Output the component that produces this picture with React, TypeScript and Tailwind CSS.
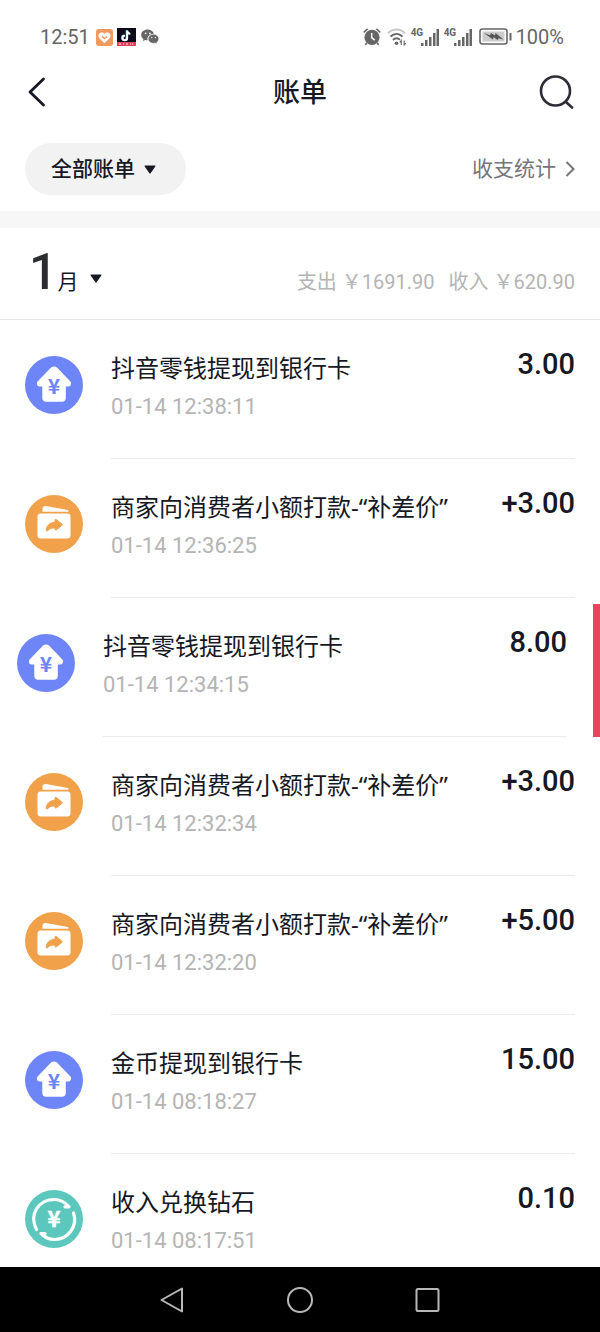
import { useState } from 'react';

type Kind = 'withdraw' | 'transfer' | 'exchange';

interface Bill {
  id: number;
  kind: Kind;
  title: string;
  time: string;
  amount: string;
}

const BILLS: Bill[] = [
  { id: 1, kind: 'withdraw', title: '抖音零钱提现到银行卡', time: '01-14 12:38:11', amount: '3.00' },
  { id: 2, kind: 'transfer', title: '商家向消费者小额打款-“补差价”', time: '01-14 12:36:25', amount: '+3.00' },
  { id: 3, kind: 'withdraw', title: '抖音零钱提现到银行卡', time: '01-14 12:34:15', amount: '8.00' },
  { id: 4, kind: 'transfer', title: '商家向消费者小额打款-“补差价”', time: '01-14 12:32:34', amount: '+3.00' },
  { id: 5, kind: 'transfer', title: '商家向消费者小额打款-“补差价”', time: '01-14 12:32:20', amount: '+5.00' },
  { id: 6, kind: 'withdraw', title: '金币提现到银行卡', time: '01-14 08:18:27', amount: '15.00' },
  { id: 7, kind: 'exchange', title: '收入兑换钻石', time: '01-14 08:17:51', amount: '0.10' },
];

function Caret() {
  return (
    <svg width="12" height="9" viewBox="0 0 12 9" fill="#161823" aria-hidden="true">
      <path d="M1.2 0.5h9.6c.6 0 .8.5.5.9L6.6 8.2c-.3.4-.9.4-1.2 0L.7 1.4C.4 1 .6.5 1.2.5z" />
    </svg>
  );
}

function SignalBars() {
  return (
    <svg width="18" height="17" viewBox="0 0 18 17" fill="#666" aria-hidden="true">
      <rect x="0" y="14" width="2.5" height="3" />
      <rect x="4" y="11" width="2.5" height="6" />
      <rect x="8" y="8" width="2.5" height="9" />
      <rect x="12" y="4" width="2.5" height="13" />
      <rect x="15.5" y="0" width="2.5" height="17" />
    </svg>
  );
}

function StatusBar() {
  return (
    <div className="flex h-[74px] shrink-0 items-center justify-between pl-10 pr-9 font-['Roboto',sans-serif] text-xl text-[#666]">
      <div className="flex items-center">
        <span>12:51</span>
        <svg className="ml-[6px]" width="17" height="17" viewBox="0 0 17 17" aria-hidden="true">
          <rect width="17" height="17" rx="3" fill="#f19a60" />
          <path d="M8.5 14.2 3.4 9.2C.9 6.4 3.6 2.6 6.7 3.6c.8.3 1.3.7 1.8 1.3.5-.6 1-1 1.8-1.3 3.1-1 5.8 2.8 3.3 5.6z" fill="#fff" />
          <path d="m6 7.2 2.4 2.3L11 7.2" fill="none" stroke="#f19a60" strokeWidth="1.4" />
        </svg>
        <svg className="ml-1" width="19" height="18" viewBox="0 0 19 18" aria-hidden="true">
          <rect width="19" height="18" fill="#0c0a18" />
          <path d="M10.2 2.5v7.6a2.3 2.3 0 1 1-2.3-2.3M10.2 3c.4 1.8 1.5 2.7 3.2 2.9" fill="none" stroke="#57d8dc" strokeWidth="2" transform="translate(-.5 -.3)" />
          <path d="M10.2 2.5v7.6a2.3 2.3 0 1 1-2.3-2.3M10.2 3c.4 1.8 1.5 2.7 3.2 2.9" fill="none" stroke="#fff" strokeWidth="1.9" />
          <rect y="14" width="19" height="4" fill="#e6405e" />
          <path d="M2 16h2m2 0h1m2 0h2m2 0h1m1 0h1" stroke="#f6b3bf" strokeWidth="1.5" />
        </svg>
        <svg className="ml-[5px]" width="18" height="16" viewBox="0 0 18 16" fill="#666" aria-hidden="true">
          <path d="M6.7.5C3 .5.2 2.9.2 5.9c0 1.7.9 3.2 2.3 4.2l-.6 2 2.3-1.2c.8.2 1.5.3 2.4.3-.9-3.5 2-6.4 6.3-6.4C12.2 2.3 9.7.5 6.7.5z" />
          <path d="M17.8 9.8c0-2.5-2.4-4.5-5.3-4.5S7.2 7.3 7.2 9.8s2.4 4.5 5.3 4.5c.6 0 1.2-.1 1.7-.2l1.9 1-.5-1.6c1.3-.8 2.2-2.2 2.2-3.7z" stroke="#fff" strokeWidth=".5" />
          <circle cx="4.6" cy="4.3" r=".9" fill="#fff" />
          <circle cx="8.9" cy="4.3" r=".9" fill="#fff" />
          <circle cx="10.8" cy="8.6" r=".7" fill="#fff" />
          <circle cx="14.3" cy="8.6" r=".7" fill="#fff" />
        </svg>
      </div>
      <div className="flex items-center">
        <svg width="18" height="18" viewBox="0 0 18 18" aria-hidden="true">
          <circle cx="9" cy="9.3" r="7.6" fill="#666" />
          <path d="M.8 4.3 4.6.9M17.2 4.3 13.4.9M3.8 15l-1.5 2M14.2 15l1.5 2" stroke="#666" strokeWidth="1.6" />
          <path d="M8.7 5v4.7l3 2.5" fill="none" stroke="#fff" strokeWidth="1.5" />
        </svg>
        <svg className="ml-[6px]" width="20" height="18" viewBox="0 0 20 18" fill="none" strokeWidth="2" aria-hidden="true">
          <path d="M1 5.3c5-5 12-5 17 0" stroke="#c8c8c8" />
          <path d="M3.5 8.6c3.7-3.4 8.5-3.4 12 0" stroke="#666" />
          <path d="M6 11.9c2.2-2 5-2 7 0" stroke="#666" />
          <circle cx="9.5" cy="15.3" r="1.8" fill="#666" />
          <path d="M14.3 17v-4.5l-1.5 1.8M17.2 12.5V17l1.6-1.8" stroke="#666" strokeWidth="1.1" />
        </svg>
        <span className="mb-2 ml-1 w-[10px] text-[10px] leading-none font-bold">4G</span>
        <SignalBars />
        <span className="mb-2 ml-[5px] w-[10px] text-[10px] leading-none font-bold">4G</span>
        <SignalBars />
        <svg className="ml-[7px]" width="33" height="18" viewBox="0 0 33 18" aria-hidden="true">
          <rect x="1" y="1" width="27" height="15" rx="2.5" fill="#fff" stroke="#666" strokeWidth="1.6" />
          <rect x="3.5" y="3.5" width="22" height="10" fill="#ccc" />
          <path d="m5 5 6 2.3 1-2.3 4 2.5.5-2.5 8 6.5-5-1.2-1 1.7-4-3-.5 2.5z" fill="#555" />
          <path d="M31.5 5v7.5" stroke="#666" strokeWidth="2" />
        </svg>
        <span className="ml-1">100%</span>
      </div>
    </div>
  );
}

function BillIcon({ kind }: { kind: Kind }) {
  if (kind === 'withdraw') {
    return (
      <svg className="mt-9 size-[58px] shrink-0" viewBox="0 0 58 58" aria-hidden="true">
        <circle cx="29" cy="29" r="29" fill="#6e85f7" />
        <path d="M26.3 11.3c1.6-1.2 3.8-1.2 5.4 0l13.7 14.3c1.4 1.7.6 4.9-1.9 4.9h-2.7v11.5c0 2.2-1.5 3.7-3.7 3.7H21c-2.2 0-3.7-1.5-3.7-3.7V30.500h-2.800c-2.500 0-3.300-3.200-1.900-4.900z" fill="#fff" />
        <text className="font-['Noto_Sans_CJK_SC']" x="29" y="38" textAnchor="middle" fontSize="21" fontWeight="700" fill="#6e85f7">¥</text>
      </svg>
    );
  }
  if (kind === 'transfer') {
    return (
      <svg className="mt-9 size-[58px] shrink-0" viewBox="0 0 58 58" aria-hidden="true">
        <circle cx="29" cy="29" r="29" fill="#f1a14a" />
        <path d="M17.5 16.8v-3c0-2 1.5-3 3.4-2.8l22 4c1 .3 1 1.8 0 1.8z" fill="#fff" />
        <rect x="12.5" y="18.5" width="33" height="25" rx="3.2" fill="#fff" />
        <path d="M30 25.2c0-.9.8-1.1 1.5-.5l5.2 4.200c.6.500.6 1.100 0 1.600l-5.200 4.200c-.7.600-1.500.3-1.500-.6v-1.200c-3.200-.1-5.500.6-7.300 2.700-.8.900-1.700.5-1.500-.6.600-4.800 3.800-7.500 8.800-7.800z" fill="#f1a14a" stroke="#f1a14a" />
      </svg>
    );
  }
  return (
    <svg className="mt-9 size-[58px] shrink-0" viewBox="0 0 58 58" aria-hidden="true">
      <circle cx="29" cy="29" r="29" fill="#5cc8bd" />
      <g fill="none" stroke="#fff" strokeWidth="3.2" strokeLinecap="round" strokeLinejoin="round">
        <path d="M11.500 39.500C3.500 24 14 9.500 29.500 9.500c5.600 0 10.500 2.500 14.500 7.300h-4" />
        <path d="M48.500 23C53 36.500 43 49.500 29.500 49.500c-5.500 0-9.500-2-13.500-6h4" />
      </g>
      <text className="font-['Noto_Sans_CJK_SC']" x="29" y="37" textAnchor="middle" fontSize="22" fontWeight="700" fill="#fff" stroke="#fff" strokeWidth=".5">¥</text>
    </svg>
  );
}

function BillRow({ bill, swiped }: { bill: Bill; swiped: boolean }) {
  return (
    <li className="flex overflow-hidden">
      <div className={`flex w-full shrink-0 gap-7 px-[25px] ${swiped ? '-ml-2' : ''}`}>
        <BillIcon kind={bill.kind} />
        <div className="flex h-[139px] min-w-0 flex-1 justify-between border-b border-[#ececec] pt-[30px]">
          <div className="min-w-0">
            <h2 className="truncate text-2xl leading-9">{bill.title}</h2>
            <p className="mt-[5px] font-['Roboto',sans-serif] text-[22px] leading-8 text-[#b4b4b4]">{bill.time}</p>
          </div>
          <span className="shrink-0 font-['Roboto',sans-serif] text-[29px] leading-7 font-medium">{bill.amount}</span>
        </div>
      </div>
      {swiped && <button type="button" aria-label="删除" className="mt-[6px] ml-px w-24 shrink-0 bg-[#e9435d]" />}
    </li>
  );
}

export default function App() {
  const [swipedId] = useState(3);

  return (
    <div className="flex h-screen flex-col bg-white font-['Noto_Sans','Noto_Sans_CJK_SC',sans-serif] text-[#161823]">
      <StatusBar />

      <header className="flex h-9 shrink-0 items-center justify-between px-[25px]">
        <button type="button" aria-label="返回" className="w-9">
          <svg width="24" height="32" viewBox="0 0 24 32" fill="none" stroke="#161823" strokeWidth="2.8" strokeLinecap="round" strokeLinejoin="round">
            <path d="M18.5 3 5 16l13.5 13" />
          </svg>
        </button>
        <h1 className="text-[27px] leading-9 font-medium">账单</h1>
        <button type="button" aria-label="搜索" className="w-9">
          <svg width="36" height="36" viewBox="0 0 36 36" fill="none" stroke="#2c2d35" strokeWidth="2.6" strokeLinecap="round">
            <circle cx="16.5" cy="17" r="14.5" />
            <path d="m27 28 6 5.5" />
          </svg>
        </button>
      </header>

      <div className="flex shrink-0 items-center justify-between px-[25px] pt-[33px] pb-4">
        <button type="button" className="flex h-[52px] items-center gap-[9px] rounded-full bg-[#f2f2f2] pr-[30px] pl-[26px] text-[21px] font-medium">
          全部账单
          <Caret />
        </button>
        <a href="#stats" className="flex items-center gap-[9px] text-[21px] text-[#75767b]">
          收支统计
          <svg width="10" height="16" viewBox="0 0 10 16" fill="none" stroke="#75767b" strokeWidth="2" aria-hidden="true">
            <path d="m1.5 1 7 7-7 7" />
          </svg>
        </a>
      </div>

      <div className="h-[17px] shrink-0 bg-[#f7f7f7]" />

      <section className="flex h-[92px] shrink-0 items-baseline justify-between border-b border-[#e6e6e6] px-[25px] pt-4">
        <button type="button" className="flex items-baseline pl-1">
          <span className="font-['Roboto',sans-serif] text-[50px] leading-14 font-medium text-[#2c2d33]">1</span>
          <span className="mr-3 text-[21px]">月</span>
          <span className="self-center pt-3">
            <Caret />
          </span>
        </button>
        <p className="flex gap-[14px] font-['Roboto','Noto_Sans_CJK_SC',sans-serif] text-xl text-[#b4b4b4]">
          <span>支出 ￥1691.90</span>
          <span>收入 ￥620.90</span>
        </p>
      </section>

      <ul className="min-h-0 flex-1 overflow-hidden">
        {BILLS.map((bill) => (
          <BillRow key={bill.id} bill={bill} swiped={bill.id === swipedId} />
        ))}
      </ul>

      <nav className="flex h-[65px] shrink-0 items-center justify-center gap-25 bg-black">
        <button type="button" aria-label="后退">
          <svg width="28" height="28" viewBox="0 0 28 28" fill="none" stroke="#b8b8b8" strokeWidth="2" strokeLinejoin="round">
            <path d="M24 2.5v23L3.5 14z" />
          </svg>
        </button>
        <button type="button" aria-label="主页">
          <svg width="28" height="28" viewBox="0 0 28 28" fill="none" stroke="#b8b8b8" strokeWidth="2">
            <circle cx="14" cy="14" r="12" />
          </svg>
        </button>
        <button type="button" aria-label="最近任务">
          <svg width="28" height="28" viewBox="0 0 28 28" fill="none" stroke="#b8b8b8" strokeWidth="2">
            <rect x="2.5" y="3" width="22" height="22" rx="1.5" />
          </svg>
        </button>
      </nav>
    </div>
  );
}
